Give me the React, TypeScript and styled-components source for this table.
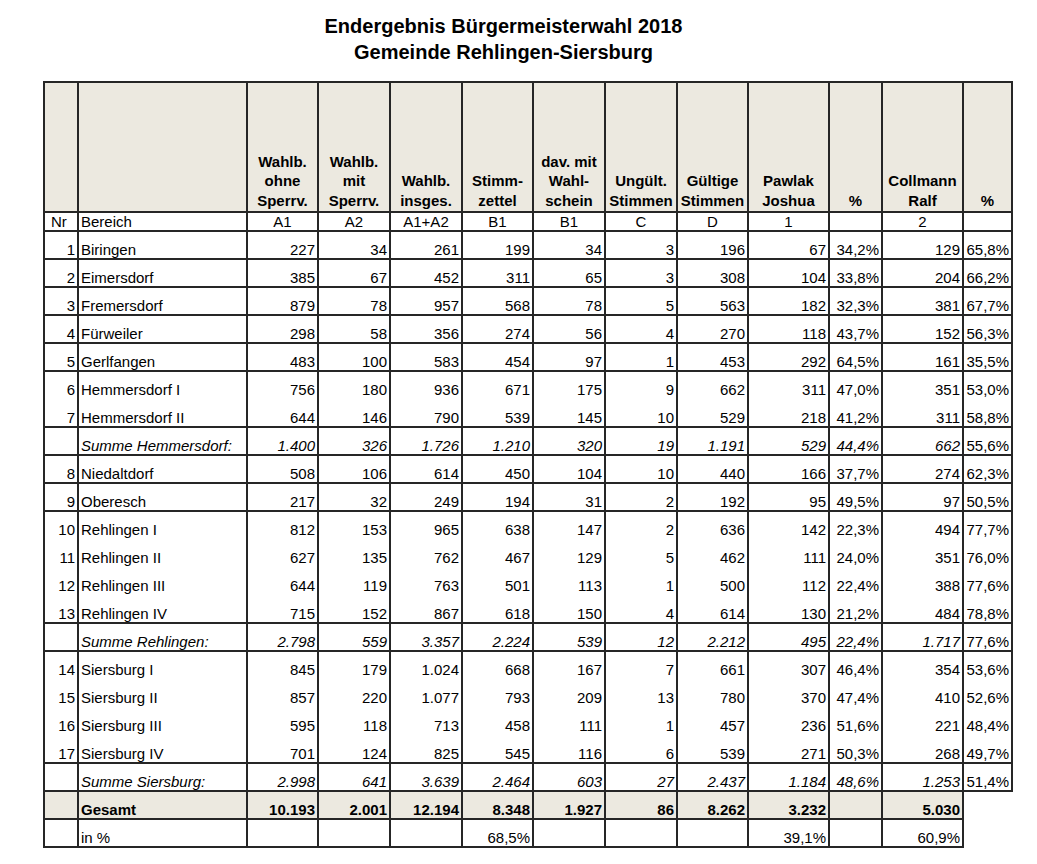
import React from "react";
import styled, { createGlobalStyle } from "styled-components";

const LINE = "#262626";
const BEIGE = "#ECE9E0";
const COLS =
  "34px 169px 71px 72px 72px 71px 72px 72px 71px 81px 53px 81px 49px";

const GlobalStyle = createGlobalStyle`
  html, body { margin: 0; padding: 0; background: #ffffff; }
  body { font-family: "Liberation Sans", Arial, sans-serif; color: #000000; }
`;

const Page = styled.main`
  padding: 13px 0 0 43px;
`;

const Title = styled.h1`
  margin: 0 0 16px;
  width: 921px;
  text-align: center;
  font-size: 20px;
  line-height: 26px;
  font-weight: 700;
`;

const Sheet = styled.div`
  display: flex;
  flex-direction: column;
  width: fit-content;
  border-left: 2px solid ${LINE};
  border-top: 2px solid ${LINE};
`;

const Row = styled.div<{ $h: number }>`
  display: grid;
  grid-template-columns: ${COLS};
  grid-auto-rows: ${(p) => p.$h}px;
`;

type Align = "left" | "center" | "right";

const justify = (a?: Align) =>
  a === "left" ? "flex-start" : a === "center" ? "center" : "flex-end";

const Cell = styled.div<{
  $align?: Align;
  $bottom?: boolean;
  $bg?: string;
  $bold?: boolean;
  $italic?: boolean;
  $padLeft?: number;
}>`
  box-sizing: border-box;
  display: flex;
  align-items: flex-end;
  justify-content: ${(p) => justify(p.$align)};
  border-right: 2px solid ${LINE};
  ${(p) =>
    p.$bottom ? `border-bottom: 2px solid ${LINE};` : `padding-bottom: 2px;`}
  background: ${(p) => p.$bg ?? "#ffffff"};
  padding-left: ${(p) => p.$padLeft ?? 2}px;
  padding-right: 2px;
  font-size: 15px;
  line-height: 16px;
  font-weight: ${(p) => (p.$bold ? 700 : 400)};
  font-style: ${(p) => (p.$italic ? "italic" : "normal")};
  white-space: nowrap;
  overflow: hidden;
`;

const HeadCell = styled.div`
  box-sizing: border-box;
  display: flex;
  align-items: flex-end;
  justify-content: center;
  text-align: center;
  border-right: 2px solid ${LINE};
  border-bottom: 2px solid ${LINE};
  background: ${BEIGE};
  padding: 0 0 1px;
  font-size: 15px;
  line-height: 19.5px;
  font-weight: 700;
  white-space: pre-line;
`;

const Blank = styled.div`
  background: #ffffff;
`;

const headers = [
  "",
  "",
  "Wahlb.\nohne\nSperrv.",
  "Wahlb.\nmit\nSperrv.",
  "Wahlb.\ninsges.",
  "Stimm-\nzettel",
  "dav. mit\nWahl-\nschein",
  "Ungült.\nStimmen",
  "Gültige\nStimmen",
  "Pawlak\nJoshua",
  "%",
  "Collmann\nRalf",
  "%",
];

const codes = ["A1", "A2", "A1+A2", "B1", "B1", "C", "D", "1", "", "2", ""];

type Line = {
  nr: string;
  name: string;
  vals: string[];
  sum?: boolean;
  bottom: boolean;
};

const lines: Line[] = [
  { nr: "1", name: "Biringen", vals: ["227", "34", "261", "199", "34", "3", "196", "67", "34,2%", "129", "65,8%"], bottom: true },
  { nr: "2", name: "Eimersdorf", vals: ["385", "67", "452", "311", "65", "3", "308", "104", "33,8%", "204", "66,2%"], bottom: true },
  { nr: "3", name: "Fremersdorf", vals: ["879", "78", "957", "568", "78", "5", "563", "182", "32,3%", "381", "67,7%"], bottom: true },
  { nr: "4", name: "Fürweiler", vals: ["298", "58", "356", "274", "56", "4", "270", "118", "43,7%", "152", "56,3%"], bottom: true },
  { nr: "5", name: "Gerlfangen", vals: ["483", "100", "583", "454", "97", "1", "453", "292", "64,5%", "161", "35,5%"], bottom: true },
  { nr: "6", name: "Hemmersdorf I", vals: ["756", "180", "936", "671", "175", "9", "662", "311", "47,0%", "351", "53,0%"], bottom: false },
  { nr: "7", name: "Hemmersdorf II", vals: ["644", "146", "790", "539", "145", "10", "529", "218", "41,2%", "311", "58,8%"], bottom: true },
  { nr: "", name: "Summe Hemmersdorf:", vals: ["1.400", "326", "1.726", "1.210", "320", "19", "1.191", "529", "44,4%", "662", "55,6%"], sum: true, bottom: true },
  { nr: "8", name: "Niedaltdorf", vals: ["508", "106", "614", "450", "104", "10", "440", "166", "37,7%", "274", "62,3%"], bottom: true },
  { nr: "9", name: "Oberesch", vals: ["217", "32", "249", "194", "31", "2", "192", "95", "49,5%", "97", "50,5%"], bottom: true },
  { nr: "10", name: "Rehlingen I", vals: ["812", "153", "965", "638", "147", "2", "636", "142", "22,3%", "494", "77,7%"], bottom: false },
  { nr: "11", name: "Rehlingen II", vals: ["627", "135", "762", "467", "129", "5", "462", "111", "24,0%", "351", "76,0%"], bottom: false },
  { nr: "12", name: "Rehlingen III", vals: ["644", "119", "763", "501", "113", "1", "500", "112", "22,4%", "388", "77,6%"], bottom: false },
  { nr: "13", name: "Rehlingen IV", vals: ["715", "152", "867", "618", "150", "4", "614", "130", "21,2%", "484", "78,8%"], bottom: true },
  { nr: "", name: "Summe Rehlingen:", vals: ["2.798", "559", "3.357", "2.224", "539", "12", "2.212", "495", "22,4%", "1.717", "77,6%"], sum: true, bottom: true },
  { nr: "14", name: "Siersburg I", vals: ["845", "179", "1.024", "668", "167", "7", "661", "307", "46,4%", "354", "53,6%"], bottom: false },
  { nr: "15", name: "Siersburg II", vals: ["857", "220", "1.077", "793", "209", "13", "780", "370", "47,4%", "410", "52,6%"], bottom: false },
  { nr: "16", name: "Siersburg III", vals: ["595", "118", "713", "458", "111", "1", "457", "236", "51,6%", "221", "48,4%"], bottom: false },
  { nr: "17", name: "Siersburg IV", vals: ["701", "124", "825", "545", "116", "6", "539", "271", "50,3%", "268", "49,7%"], bottom: true },
  { nr: "", name: "Summe Siersburg:", vals: ["2.998", "641", "3.639", "2.464", "603", "27", "2.437", "1.184", "48,6%", "1.253", "51,4%"], sum: true, bottom: true },
];

const total = ["10.193", "2.001", "12.194", "8.348", "1.927", "86", "8.262", "3.232", "", "5.030"];
const shares = ["", "", "", "68,5%", "", "", "", "39,1%", "", "60,9%"];

export default function App() {
  return (
    <>
      <GlobalStyle />
      <Page>
        <Title>
          Endergebnis Bürgermeisterwahl 2018
          <br />
          Gemeinde Rehlingen-Siersburg
        </Title>
        <Sheet>
          <Row $h={130}>
            {headers.map((h, i) => (
              <HeadCell key={i}>{h}</HeadCell>
            ))}
          </Row>
          <Row $h={19}>
            <Cell $align="left" $padLeft={6} $bottom>
              Nr
            </Cell>
            <Cell $align="left" $bottom>
              Bereich
            </Cell>
            {codes.map((c, i) => (
              <Cell key={i} $align="center" $bottom>
                {c}
              </Cell>
            ))}
          </Row>
          {lines.map((l, r) => (
            <Row $h={28} key={r}>
              <Cell $bottom={l.bottom}>{l.nr}</Cell>
              <Cell $align="left" $bottom={l.bottom} $italic={l.sum}>
                {l.name}
              </Cell>
              {l.vals.map((v, i) => (
                <Cell
                  key={i}
                  $bottom={l.bottom}
                  $italic={l.sum && i < l.vals.length - 1}
                >
                  {v}
                </Cell>
              ))}
            </Row>
          ))}
          <Row $h={28}>
            <Cell $bottom $bg={BEIGE} />
            <Cell $align="left" $bottom $bg={BEIGE} $bold>
              Gesamt
            </Cell>
            {total.map((v, i) => (
              <Cell key={i} $bottom $bg={BEIGE} $bold>
                {v}
              </Cell>
            ))}
            <Blank />
          </Row>
          <Row $h={28}>
            <Cell $bottom />
            <Cell $align="left" $bottom>
              in %
            </Cell>
            {shares.map((v, i) => (
              <Cell key={i} $bottom>
                {v}
              </Cell>
            ))}
            <Blank />
          </Row>
        </Sheet>
      </Page>
    </>
  );
}
